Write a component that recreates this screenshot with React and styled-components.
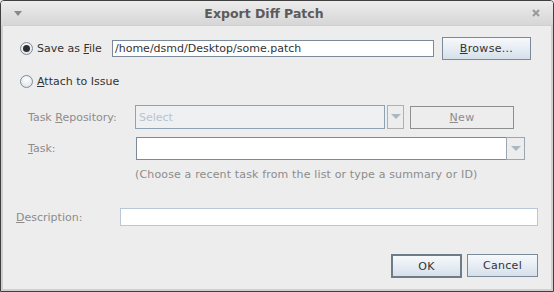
import React from 'react'
import styled, { createGlobalStyle } from 'styled-components'

const Global = createGlobalStyle`
  html, body { margin: 0; padding: 0; background: #ededed; }
  * { box-sizing: border-box; }
  body { font-family: "DejaVu Sans", "Liberation Sans", sans-serif; font-size: 11px; color: #333; }
`

const Window = styled.div`
  width: 554px;
  height: 292px;
  display: flex;
  flex-direction: column;
  background: #ededed;
  border: 1px solid #3f3f3f;
  border-radius: 4px 4px 0 0;
  overflow: hidden;
`

const TitleBar = styled.div`
  height: 25px;
  flex: none;
  display: flex;
  align-items: center;
  padding: 0 13px 0 13px;
  background: linear-gradient(#ececec, #d6d6d6);
  border-bottom: 1px solid #d0d0d0;
  .title {
    flex: 1;
    text-align: center;
    padding-right: 26px;
    font-weight: bold;
    font-size: 12.5px;
    color: #5b5b5b;
  }
`

const Frame = styled.div`
  flex: 1;
  display: flex;
  flex-direction: column;
  border: 2px solid #cfcfcf;
  border-top: none;
  padding: 11px 12px 11px 13px;
`

const Row = styled.div`
  display: flex;
  align-items: center;
  height: ${p => p.h || 23}px;
  margin-top: ${p => p.mt || 0}px;
  padding-left: ${p => p.pl || 0}px;
`

const Radio = styled.span`
  width: 13px;
  height: 13px;
  border-radius: 50%;
  border: 1px solid #7e8b98;
  background: radial-gradient(circle at 50% 35%, #ffffff, #d5dde6);
  display: inline-flex;
  align-items: center;
  justify-content: center;
  margin-right: 4px;
  flex: none;
  &::after {
    content: '';
    display: ${p => (p.checked ? 'block' : 'none')};
    width: 7px;
    height: 7px;
    border-radius: 50%;
    background: #2e2e2e;
  }
`

const Label = styled.span`
  color: ${p => (p.disabled ? '#8c8c8c' : '#333')};
  width: ${p => (p.w ? p.w + 'px' : 'auto')};
  flex: none;
  white-space: nowrap;
  u { text-decoration: underline; text-underline-offset: 1px; }
`

const TextField = styled.div`
  height: ${p => p.h || 18}px;
  width: ${p => p.w}px;
  background: #fff;
  border: 1px solid ${p => p.border || '#7a8a99'};
  display: flex;
  align-items: center;
  padding-left: 2px;
  color: #333;
  flex: none;
  white-space: nowrap;
  overflow: hidden;
`

const Button = styled.div`
  width: ${p => p.w}px;
  height: ${p => p.h || 23}px;
  flex: none;
  display: flex;
  align-items: center;
  justify-content: center;
  border: ${p => (p.primary ? '2px solid #6e7c8a' : '1px solid #7a8a99')};
  background: ${p => (p.disabled ? '#ededed' : 'linear-gradient(#f6f9fc, #d6e0ea)')};
  border-color: ${p => (p.disabled ? '#8f8f8f' : undefined)};
  color: ${p => (p.disabled ? '#8c8c8c' : '#333')};
  letter-spacing: 0.3px;
  u { text-decoration: underline; text-underline-offset: 1px; }
`

const Spacer = styled.div`
  width: ${p => p.w}px;
  flex: none;
`

const Combo = styled.div`
  display: flex;
  flex: none;
  height: ${p => p.h || 23}px;
  gap: ${p => p.gap || 0}px;
`

const ComboField = styled.div`
  width: ${p => p.w}px;
  height: 100%;
  border: 1px solid ${p => (p.disabled ? '#8ea2b6' : '#7a8a99')};
  border-right: ${p => (p.joined ? 'none' : undefined)};
  background: ${p => (p.disabled ? '#eef0f2' : '#fff')};
  color: #b4c4d4;
  display: flex;
  align-items: center;
  padding-left: 3px;
`

const ComboArrow = styled.div`
  width: ${p => p.w}px;
  height: 100%;
  border: 1px solid ${p => (p.disabled ? '#b0b0b0' : '#9aa6b2')};
  background: #ededed;
  display: flex;
  align-items: center;
  justify-content: center;
`

const Hint = styled.div`
  color: #8c8c8c;
  padding-left: 119px;
  margin-top: 8px;
  height: 14px;
  letter-spacing: 0.15px;
`

const Footer = styled.div`
  margin-top: auto;
  display: flex;
  justify-content: flex-end;
  align-items: flex-start;
  gap: 5px;
  padding-right: 1px;
`

const Arrow = ({ color = '#aab8c6' }) => (
  <svg width="10" height="6" viewBox="0 0 10 6">
    <polygon points="0,0 10,0 5,5" fill={color} />
  </svg>
)

export default function App() {
  return (
    <>
      <Global />
      <Window>
        <TitleBar>
          <svg width="8" height="5" viewBox="0 0 8 5">
            <polygon points="0,0 8,0 4,5" fill="#8a8a8a" />
          </svg>
          <span className="title">Export Diff Patch</span>
          <svg width="8" height="8" viewBox="0 0 8 8">
            <path d="M1 1 L7 7 M7 1 L1 7" stroke="#9a9a9a" strokeWidth="2" />
          </svg>
        </TitleBar>
        <Frame>
          <Row pl={4}>
            <Radio checked />
            <Label style={{ width: 75 }}>Save as <u>F</u>ile</Label>
            <TextField w={322} h={17}>/home/dsmd/Desktop/some.patch</TextField>
            <Spacer w={8} />
            <Button w={89}><span><u>B</u>rowse...</span></Button>
          </Row>
          <Row pl={4} mt={13} h={16}>
            <Radio />
            <Label><u>A</u>ttach to Issue</Label>
          </Row>
          <Row pl={12} mt={16} h={24}>
            <Label disabled w={107}>Task <u>R</u>epository:</Label>
            <Combo h={24} gap={2}>
              <ComboField w={250} disabled>Select</ComboField>
              <ComboArrow w={17} disabled><Arrow /></ComboArrow>
            </Combo>
            <Spacer w={6} />
            <Button w={104} disabled><span><u>N</u>ew</span></Button>
          </Row>
          <Row pl={12} mt={8} h={23}>
            <Label disabled w={108}><u>T</u>ask:</Label>
            <Combo h={23}>
              <ComboField w={370} joined />
              <ComboArrow w={19}><Arrow /></ComboArrow>
            </Combo>
          </Row>
          <Hint>(Choose a recent task from the list or type a summary or ID)</Hint>
          <Row pl={0} mt={26} h={18}>
            <Label disabled w={104}><u>D</u>escription:</Label>
            <TextField w={418} h={18} border="#b8c8d8" />
          </Row>
          <Footer>
            <Button w={71} h={24} primary>OK</Button>
            <Button w={71} h={23}>Cancel</Button>
          </Footer>
        </Frame>
      </Window>
    </>
  )
}
